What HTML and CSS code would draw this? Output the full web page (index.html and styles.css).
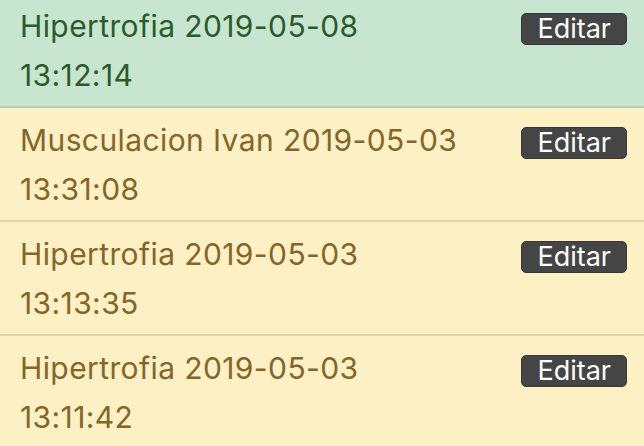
FILE: index.html
```html
<!DOCTYPE html>
<html lang="es">
<head>
<meta charset="utf-8">
<link rel="stylesheet" href="styles.css">
</head>
<body>
<ul class="list">
  <li class="item item-success">
    <span class="label">Hipertrofia 2019-05-08<br>13:12:14</span>
    <button class="btn">Editar</button>
  </li>
  <li class="item item-warning">
    <span class="label">Musculacion Ivan 2019-05-03<br>13:31:08</span>
    <button class="btn">Editar</button>
  </li>
  <li class="item item-warning">
    <span class="label">Hipertrofia 2019-05-03<br>13:13:35</span>
    <button class="btn">Editar</button>
  </li>
  <li class="item item-warning">
    <span class="label">Hipertrofia 2019-05-03<br>13:11:42</span>
    <button class="btn">Editar</button>
  </li>
</ul>
</body>
</html>
```
FILE: styles.css
```css
html, body {
  margin: 0;
  padding: 0;
  background: #fdf0c4;
  overflow: hidden;
}
body {
  font-family: Inter, "Liberation Sans", Arial, sans-serif;
}
.list {
  list-style: none;
  margin: -6px 0 0 0;
  padding: 0;
}
.item {
  display: flex;
  justify-content: space-between;
  align-items: flex-start;
  padding: 8px 17px 6px 20px;
  border-bottom: 2px solid rgba(0, 0, 0, 0.11);
  font-size: 30px;
  letter-spacing: 0.4px;
  line-height: 49px;
}
.item-success {
  background: #c8e6cf;
  color: #2b5b2d;
}
.item-warning {
  background: #fdf0c4;
  color: #84652a;
}
.label {
  display: block;
}
.btn {
  margin-top: 11px;
  font-family: Inter, "Liberation Sans", Arial, sans-serif;
  font-size: 27px;
  letter-spacing: 0;
  line-height: 30px;
  padding: 0 15px;
  background: #454545;
  color: #fff;
  border: 1px solid #383838;
  border-radius: 5px;
}
```
